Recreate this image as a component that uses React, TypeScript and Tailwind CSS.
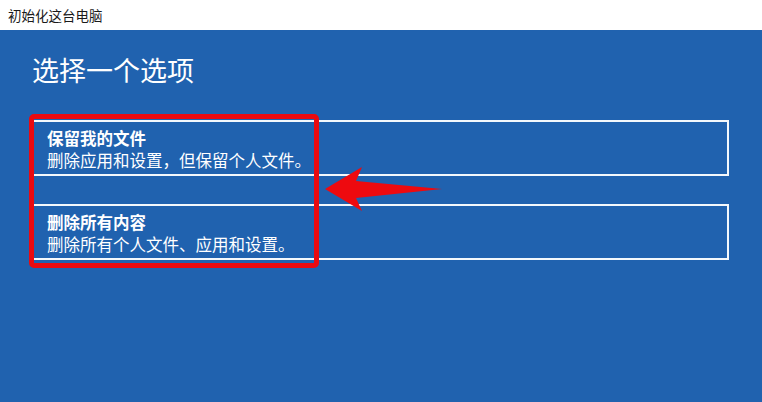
import React from "react";

const font = { fontFamily: '"Noto Sans CJK SC", "Noto Sans", sans-serif' };

function Option({ title, desc }: { title: string; desc: string }) {
  return (
    <div className="border-2 border-[#f4f8fc] h-[56px] pl-[13px] pt-[5px] flex flex-col">
      <div className="text-white text-[16.5px] font-bold leading-[22px]">{title}</div>
      <div className="text-white text-[16.5px] leading-[22px]">{desc}</div>
    </div>
  );
}

export default function App() {
  return (
    <div className="w-[762px] h-[402px] flex flex-col relative overflow-hidden" style={font}>
      <div className="h-[30px] bg-white flex items-center pl-[8px] text-[13.5px] text-[#1a1a1a]">
        初始化这台电脑
      </div>
      <div className="flex-1 bg-[#2062af] pl-[32px] pr-[33px] pt-[21px] flex flex-col">
        <div className="text-white text-[27px] leading-[38px]">选择一个选项</div>
        <div className="mt-[31px] flex flex-col gap-[28px]">
          <Option title="保留我的文件" desc="删除应用和设置，但保留个人文件。" />
          <Option title="删除所有内容" desc="删除所有个人文件、应用和设置。" />
        </div>
      </div>
      <div className="absolute left-[29px] top-[114px] w-[290px] h-[154px] border-[5px] border-[#ea0a10] rounded-[5px]" />
      <svg className="absolute left-0 top-0" width="762" height="402" viewBox="0 0 762 402">
        <path d="M325 189 L362 167 L356 181 L442 189 L356 198 L362 211 Z" fill="#ee0a0f" />
      </svg>
    </div>
  );
}
